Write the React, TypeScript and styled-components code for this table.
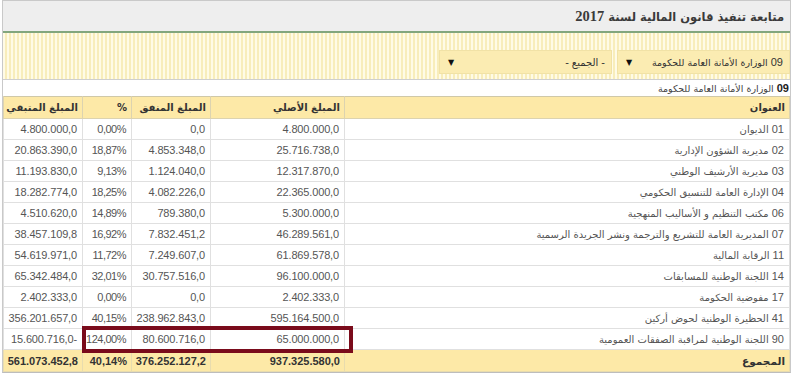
import React from "react";
import styled, { createGlobalStyle } from "styled-components";

const Global = createGlobalStyle`
  html, body { margin: 0; padding: 0; background: #fff; }
  body { font-family: "Liberation Sans", "DejaVu Sans", sans-serif; }
`;

const Page = styled.div`
  padding: 0 0 0 2px;
  width: 798px;
  box-sizing: border-box;
`;

const Panel = styled.div`
  width: 789px;
  box-sizing: border-box;
  border: 1px solid #c9c9c9;
  border-bottom-color: #bdbdbd;
  direction: rtl;
  background: #fff;
`;

const TitleBar = styled.div`
  height: 30px;
  background: #eeeeee;
  border-bottom: 2px solid #82a67e;
  display: flex;
  align-items: center;
  padding-right: 6px;
`;

const Title = styled.h1`
  margin: 0;
  font-family: "DejaVu Sans", sans-serif;
  font-size: 11.5px;
  font-weight: bold;
  color: #3a3a3a;
`;

const Year = styled.span`
  font-family: "Liberation Serif", serif;
  font-size: 14.5px;
`;

const Filters = styled.div`
  height: 47px;
  border-bottom: 1px solid #cfcfcf;
  background: repeating-linear-gradient(
    90deg,
    #fffbe6 0px,
    #fffbe6 2px,
    #f8edbb 2px,
    #f8edbb 4px
  );
  display: flex;
  align-items: flex-end;
  gap: 5px;
  padding-bottom: 5px;
  box-sizing: border-box;
`;

const Select = styled.div`
  width: 173px;
  height: 24px;
  box-sizing: border-box;
  background: #fbecb2;
  border: 1px solid #f1e2a6;
  display: flex;
  align-items: center;
  justify-content: space-between;
  padding: 0 6px 0 8px;
  font-size: 11px;
  color: #333;
  white-space: nowrap;
`;

const Ar = styled.span<{ $size?: number }>`
  font-family: "DejaVu Sans", sans-serif;
  font-size: ${(p) => p.$size ?? 10}px;
  line-height: 1;
`;

const Arrow = styled.span`
  font-family: "DejaVu Sans", sans-serif;
  font-size: 8px;
  color: #111;
`;

const Subtitle = styled.div`
  height: 16px;
  font-size: 11px;
  color: #444;
  line-height: 16px;
  padding-right: 1px;
  white-space: nowrap;
  b { color: #222; }
`;

const TableWrap = styled.div`
  position: relative;
`;

const Table = styled.table`
  width: 100%;
  border-collapse: collapse;
  table-layout: fixed;
  font-size: 11px;
`;

const Th = styled.th<{ $w?: number }>`
  ${(p) => (p.$w ? `width: ${p.$w}px;` : "")}
  height: 22px;
  background: #fde9a7;
  color: #333;
  font-family: "DejaVu Sans", sans-serif;
  font-size: 10px;
  font-weight: bold;
  text-align: right;
  padding: 0 4px;
  border: 1px solid #dcd3b0;
  border-top-color: #cfc8a8;
  box-sizing: border-box;
  white-space: nowrap;
  overflow: hidden;
`;

const Td = styled.td<{ $spacing?: number }>`
  height: 21px;
  box-sizing: border-box;
  padding: 0 5px;
  text-align: right;
  vertical-align: middle;
  color: #555;
  border: 1px solid #e0e0e0;
  white-space: nowrap;
  overflow: hidden;
  ${(p) => (p.$spacing ? `letter-spacing: ${p.$spacing}px;` : "")}
`;

const TotalTd = styled.td`
  height: 22px;
  box-sizing: border-box;
  padding: 0 4px;
  text-align: right;
  color: #333;
  font-weight: bold;
  background: #fde9a7;
  border: 1px solid #e8dcae;
  white-space: nowrap;
  overflow: hidden;
`;

const Highlight = styled.div`
  position: absolute;
  left: 79px;
  top: 230px;
  width: 271px;
  height: 27px;
  box-sizing: border-box;
  border: 4px solid #7a0b1b;
  pointer-events: none;
`;

const rows: [string, string, string, string, string, string][] = [
  ["01", "الديوان", "4.800.000,0", "0,0", "0,00%", "4.800.000,0"],
  ["02", "مديرية الشؤون الإدارية", "25.716.738,0", "4.853.348,0", "18,87%", "20.863.390,0"],
  ["03", "مديرية الأرشيف الوطني", "12.317.870,0", "1.124.040,0", "9,13%", "11.193.830,0"],
  ["04", "الإدارة العامة للتنسيق الحكومي", "22.365.000,0", "4.082.226,0", "18,25%", "18.282.774,0"],
  ["06", "مكتب التنظيم و الأساليب المنهجية", "5.300.000,0", "789.380,0", "14,89%", "4.510.620,0"],
  ["07", "المديرية العامة للتشريع والترجمة ونشر الجريدة الرسمية", "46.289.561,0", "7.832.451,2", "16,92%", "38.457.109,8"],
  ["11", "الرقابة المالية", "61.869.578,0", "7.249.607,0", "11,72%", "54.619.971,0"],
  ["14", "اللجنة الوطنية للمسابقات", "96.100.000,0", "30.757.516,0", "32,01%", "65.342.484,0"],
  ["17", "مفوضية الحكومة", "2.402.333,0", "0,0", "0,00%", "2.402.333,0"],
  ["41", "الحظيرة الوطنية لحوض أركين", "595.164.500,0", "238.962.843,0", "40,15%", "356.201.657,0"],
  ["90", "اللجنة الوطنية لمراقبة الصفقات العمومية", "65.000.000,0", "80.600.716,0", "124,00%", "-15.600.716,0"],
];

export default function App() {
  return (
    <>
      <Global />
      <Page>
        <Panel>
          <TitleBar>
            <Title>
              متابعة تنفيذ قانون المالية لسنة <Year>2017</Year>
            </Title>
          </TitleBar>
          <Filters>
            <Select>
              <span>
                09 <Ar $size={9.5}>الوزارة الأمانة العامة للحكومة</Ar>
              </span>
              <Arrow>▼</Arrow>
            </Select>
            <Select>
              <span>
                - <Ar $size={10}>الجميع</Ar> -
              </span>
              <Arrow>▼</Arrow>
            </Select>
          </Filters>
          <Subtitle>
            <b>09</b> <Ar $size={9.5}>الوزارة الأمانة العامة للحكومة</Ar>
          </Subtitle>
          <TableWrap>
            <Table>
              <thead>
                <tr>
                  <Th>العنوان</Th>
                  <Th $w={134}>المبلغ الأصلي</Th>
                  <Th $w={79}>المبلغ المنفق</Th>
                  <Th $w={49}>%</Th>
                  <Th $w={79}>المبلغ المتبقي</Th>
                </tr>
              </thead>
              <tbody>
                {rows.map(([code, name, a, b, c, d]) => (
                  <tr key={code}>
                    <Td>
                      {code} <Ar>{name}</Ar>
                    </Td>
                    <Td $spacing={-0.15}>{a}</Td>
                    <Td $spacing={-0.15}>{b}</Td>
                    <Td $spacing={-0.5}>{c}</Td>
                    <Td $spacing={-0.15}>{d}</Td>
                  </tr>
                ))}
                <tr>
                  <TotalTd>
                    <Ar $size={10.5}>المجموع</Ar>
                  </TotalTd>
                  <TotalTd>937.325.580,0</TotalTd>
                  <TotalTd>376.252.127,2</TotalTd>
                  <TotalTd>40,14%</TotalTd>
                  <TotalTd>561.073.452,8</TotalTd>
                </tr>
              </tbody>
            </Table>
            <Highlight />
          </TableWrap>
        </Panel>
      </Page>
    </>
  );
}
